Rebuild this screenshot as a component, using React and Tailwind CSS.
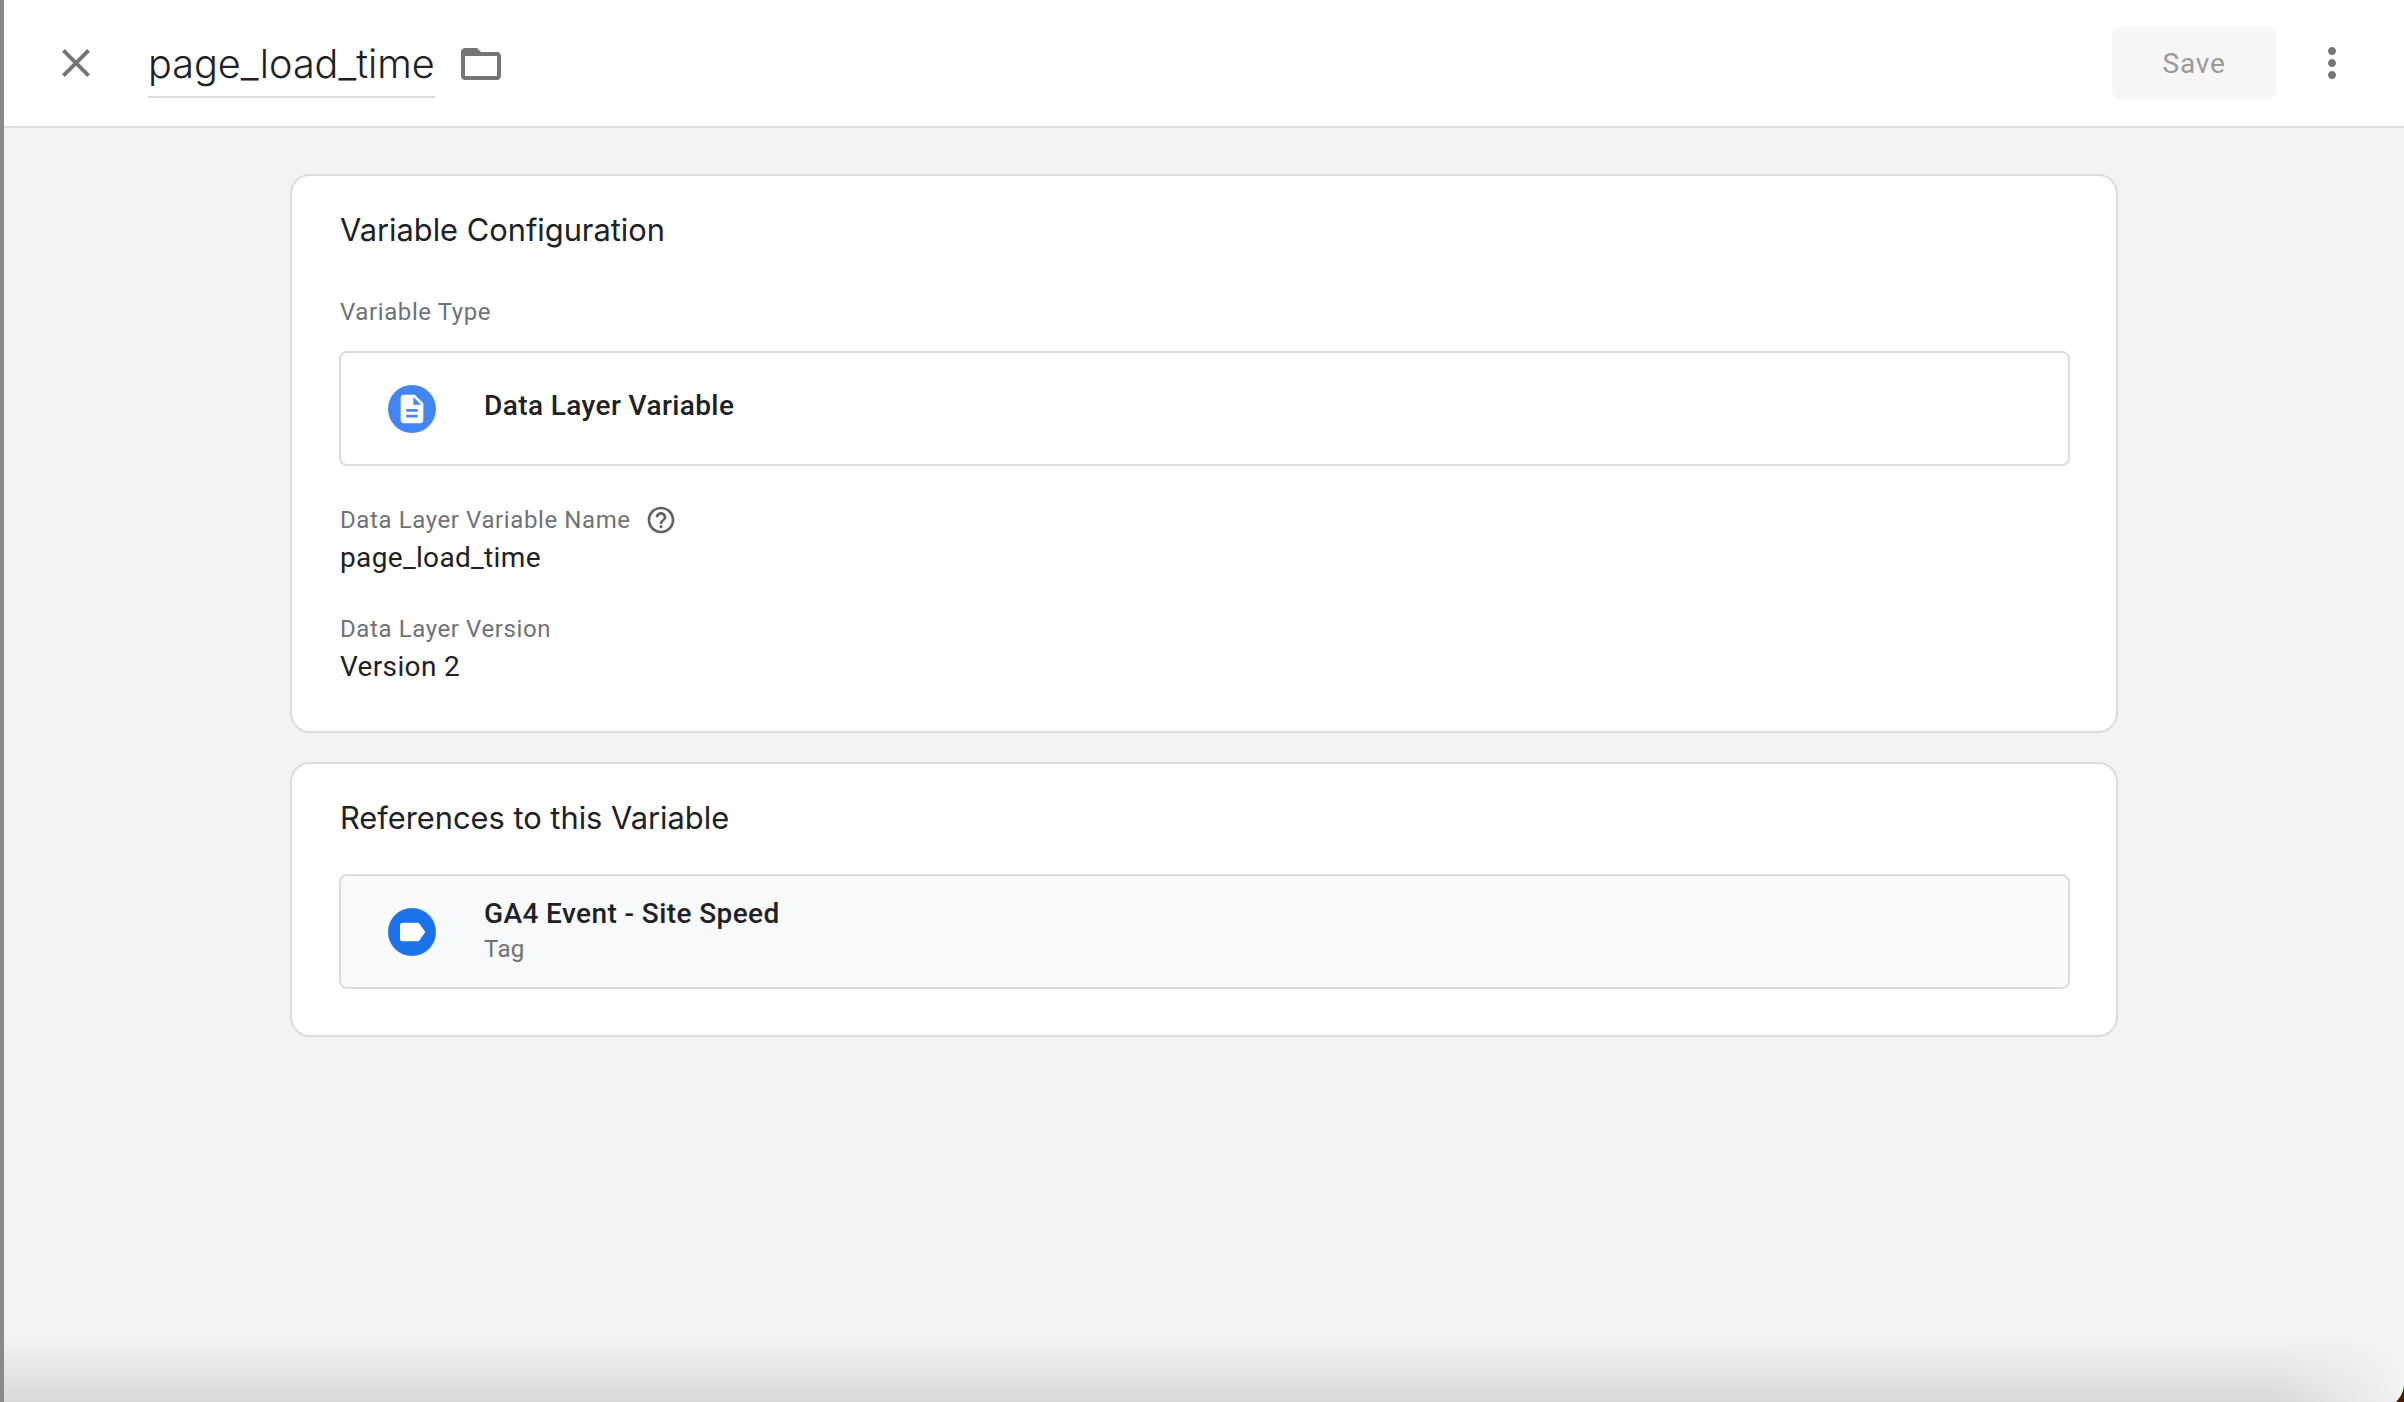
import React from 'react';

const heading = "font-['Inter',sans-serif] text-[30.8px] font-normal text-[#202124]";
const label = "text-[24px] leading-[30px] tracking-[0.6px] text-[#6f7275]";
const value = "text-[28px] leading-[36px] tracking-[0.35px] text-[#202124]";

const Icon = ({ d, size = 48, className = '' }) => (
  <svg viewBox="0 0 24 24" width={size} height={size} className={className} fill="currentColor">
    <path d={d} />
  </svg>
);

const Header = () => (
  <header className="flex h-[128px] shrink-0 items-center border-b-2 border-[#dadce0] bg-white pl-[48px] pr-[48px]">
    <Icon
      className="text-[#757575]"
      d="M19 6.41L17.59 5 12 10.59 6.41 5 5 6.41 10.59 12 5 17.59 6.41 19 12 13.41 17.59 19 19 17.59 13.41 12z"
    />
    <div className="ml-[48px] flex h-[70px] items-center border-b-2 border-[#dadce0] pt-[6px] font-['Inter',sans-serif] text-[39.6px] font-light text-[#202124]">
      page_load_time
    </div>
    <Icon
      className="ml-[22px] mt-[2px] text-[#757575]"
      d="M20 6h-8l-2-2H4c-1.1 0-1.99.9-1.99 2L2 18c0 1.1.9 2 2 2h16c1.1 0 2-.9 2-2V8c0-1.1-.9-2-2-2zm0 12H4V8h16v10z"
    />
    <button className="ml-auto flex h-[72px] w-[164px] items-center justify-center rounded-[8px] bg-[#f6f6f6] pt-[1px] text-[28px] tracking-[0.8px] text-[#9a9a9a]">
      Save
    </button>
    <Icon
      className="ml-[32px] text-[#757575]"
      d="M12 8c1.1 0 2-.9 2-2s-.9-2-2-2-2 .9-2 2 .9 2 2 2zm0 2c-1.1 0-2 .9-2 2s.9 2 2 2 2-.9 2-2-.9-2-2-2zm0 6c-1.1 0-2 .9-2 2s.9 2 2 2 2-.9 2-2-.9-2-2-2z"
    />
  </header>
);

const Row = ({ color, iconD, iconSize, title, subtitle, className = '' }) => (
  <div className={`-ml-[1px] flex h-[115px] items-center rounded-[8px] border-2 border-[#dadce0] pl-[47px] ${className}`}>
    <div className={`flex h-[48px] w-[48px] shrink-0 items-center justify-center rounded-full text-white ${color}`}>
      <Icon d={iconD} size={iconSize} />
    </div>
    <div className={`ml-[48px] ${subtitle ? 'pb-[3px]' : 'pb-[6px]'}`}>
      <div className="text-[28px] font-medium leading-[36px] tracking-[0.4px] text-[#202124]">{title}</div>
      {subtitle && <div className="mt-[1px] text-[24px] leading-[32px] tracking-[0.4px] text-[#6f7275]">{subtitle}</div>}
    </div>
  </div>
);

export default function App() {
  return (
    <div className="relative flex h-[1402px] overflow-hidden bg-[#f1f3f4] font-['Roboto',sans-serif]">
      <div className="w-[4px] shrink-0 bg-[#8a8a8a]" />
      <div className="flex min-w-0 flex-1 flex-col">
        <Header />
        <main className="mx-auto flex w-[1828px] flex-col gap-[29px] pt-[46px]">
          <section className="h-[559px] rounded-[20px] border-2 border-[#dadce0] bg-white pl-[48px] pr-[46px] pt-[30px]">
            <h2 className={`${heading} leading-[48px]`}>Variable Configuration</h2>
            <div className={`${label} mt-[43px]`}>Variable Type</div>
            <Row
              className="mt-[24px] bg-white"
              color="bg-[#4285f4]"
              iconSize={34}
              iconD="M14 2H6c-1.1 0-1.99.9-1.99 2L4 20c0 1.1.89 2 1.99 2H18c1.1 0 2-.9 2-2V8l-6-6zm2 16H8v-2h8v2zm0-4H8v-2h8v2zm-3-5V3.5L18.5 9H13z"
              title="Data Layer Variable"
            />
            <div className={`${label} mt-[38px] flex items-center`}>
              Data Layer Variable Name
              <Icon
                className="ml-[14px] text-[#5f6368]"
                size={32}
                d="M11 18h2v-2h-2v2zm1-16C6.48 2 2 6.48 2 12s4.48 10 10 10 10-4.48 10-10S17.52 2 12 2zm0 18c-4.41 0-8-3.59-8-8s3.59-8 8-8 8 3.59 8 8-3.59 8-8 8zm0-14c-2.21 0-4 1.79-4 4h2c0-1.1.9-2 2-2s2 .9 2 2c0 2-3 1.75-3 5h2c0-2.25 3-2.5 3-5 0-2.21-1.79-4-4-4z"
              />
            </div>
            <div className={`${value} mt-[4px]`}>page_load_time</div>
            <div className={`${label} mt-[38px]`}>Data Layer Version</div>
            <div className={`${value} mt-[5px]`}>Version 2</div>
          </section>
          <section className="h-[275px] rounded-[20px] border-2 border-[#dadce0] bg-white pl-[48px] pr-[46px] pt-[30px]">
            <h2 className={`${heading} leading-[48px]`}>References to this Variable</h2>
            <Row
              className="mt-[32px] bg-[#f8f9fa]"
              color="bg-[#1a73e8]"
              iconSize={32}
              iconD="M17.63 5.84C17.27 5.33 16.67 5 16 5L5 5.01C3.9 5.01 3 5.9 3 7v10c0 1.1.9 1.99 2 1.99L16 19c.67 0 1.27-.33 1.63-.84L22 12l-4.37-6.16z"
              title="GA4 Event - Site Speed"
              subtitle="Tag"
            />
          </section>
        </main>
      </div>
      {/* window shadow along the bottom edge */}
      <div className="pointer-events-none absolute inset-x-[4px] bottom-0 h-[64px] bg-gradient-to-b from-transparent to-[#d8d9db]" />
      <div className="pointer-events-none absolute bottom-0 right-0 h-[64px] w-[130px] bg-gradient-to-r from-transparent to-[#f1f3f4]" />
      <svg className="absolute bottom-0 right-0" width="8" height="16" viewBox="0 0 8 16">
        <path d="M8 0V16H0C4 12 7 7 8 0Z" fill="#4a1a0c" />
      </svg>
    </div>
  );
}
